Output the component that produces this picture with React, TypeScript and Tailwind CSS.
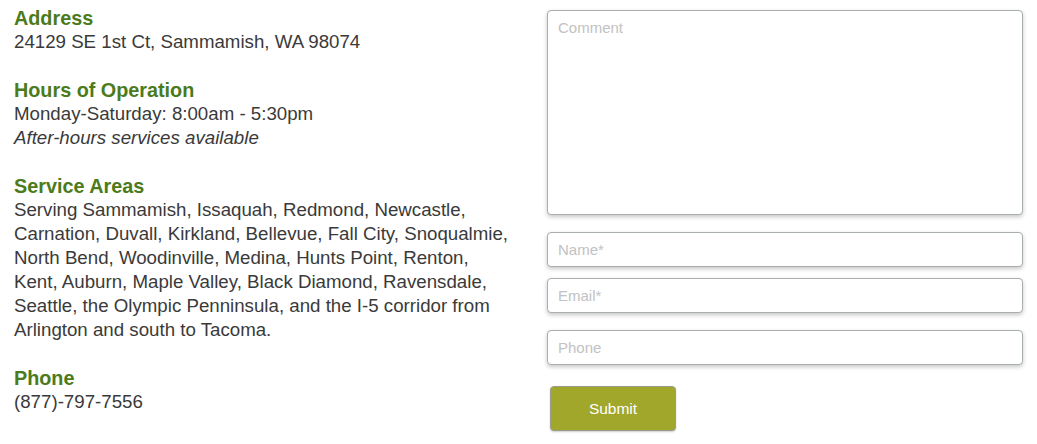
import React from 'react';

const lines = [
  'Serving Sammamish, Issaquah, Redmond, Newcastle,',
  'Carnation, Duvall, Kirkland, Bellevue, Fall City, Snoqualmie,',
  'North Bend, Woodinville, Medina, Hunts Point, Renton,',
  'Kent, Auburn, Maple Valley, Black Diamond, Ravensdale,',
  'Seattle, the Olympic Penninsula, and the I-5 corridor from',
  'Arlington and south to Tacoma.',
];

const fieldClass =
  'block w-full rounded-[4px] border border-[#a9aeae] bg-white px-[10px] text-[15px] font-light text-[#333] placeholder:text-[#c2c2c2] shadow-[0_2px_4px_rgba(0,0,0,0.22)] outline-none';

const App: React.FC = () => {
  return (
    <div className="flex w-[1037px] h-[444px] bg-white font-['Liberation_Sans',Arial,sans-serif] text-[#3a3a3a]">
      <div className="w-[547px] pl-[14px] pt-[6px] text-[18.7px] leading-[24px]">
        <h3 className="font-bold text-[19.8px] text-[#4b7b1a]">Address</h3>
        <p className="mb-[24px]">24129 SE 1st Ct, Sammamish, WA 98074</p>

        <h3 className="font-bold text-[19.8px] text-[#4b7b1a]">Hours of Operation</h3>
        <p>Monday-Saturday: 8:00am - 5:30pm</p>
        <p className="italic mb-[24px]">After-hours services available</p>

        <h3 className="font-bold text-[19.8px] text-[#4b7b1a]">Service Areas</h3>
        <p className="mb-[24px]">
          {lines.map((l) => (
            <span key={l} className="block whitespace-nowrap">{l}</span>
          ))}
        </p>

        <h3 className="font-bold text-[19.8px] text-[#4b7b1a]">Phone</h3>
        <p>(877)-797-7556</p>
      </div>

      <form className="w-[476px] pt-[10px]" onSubmit={(e) => e.preventDefault()}>
        <textarea
          placeholder="Comment"
          className={fieldClass + ' h-[205px] resize-none pt-[8px] leading-[18px]'}
        />
        <input type="text" placeholder="Name*" className={fieldClass + ' mt-[17px] h-[35px]'} />
        <input type="email" placeholder="Email*" className={fieldClass + ' mt-[11px] h-[35px]'} />
        <input type="tel" placeholder="Phone" className={fieldClass + ' mt-[17px] h-[35px]'} />
        <button
          type="submit"
          className="ml-[3px] mt-[21px] h-[45px] w-[126px] rounded-[4px] border border-[#9a9c8c] bg-[#a1a72a] text-[15.5px] font-light text-white shadow-[0_1px_2px_rgba(0,0,0,0.2)]"
        >
          Submit
        </button>
      </form>
    </div>
  );
};

export default App;
